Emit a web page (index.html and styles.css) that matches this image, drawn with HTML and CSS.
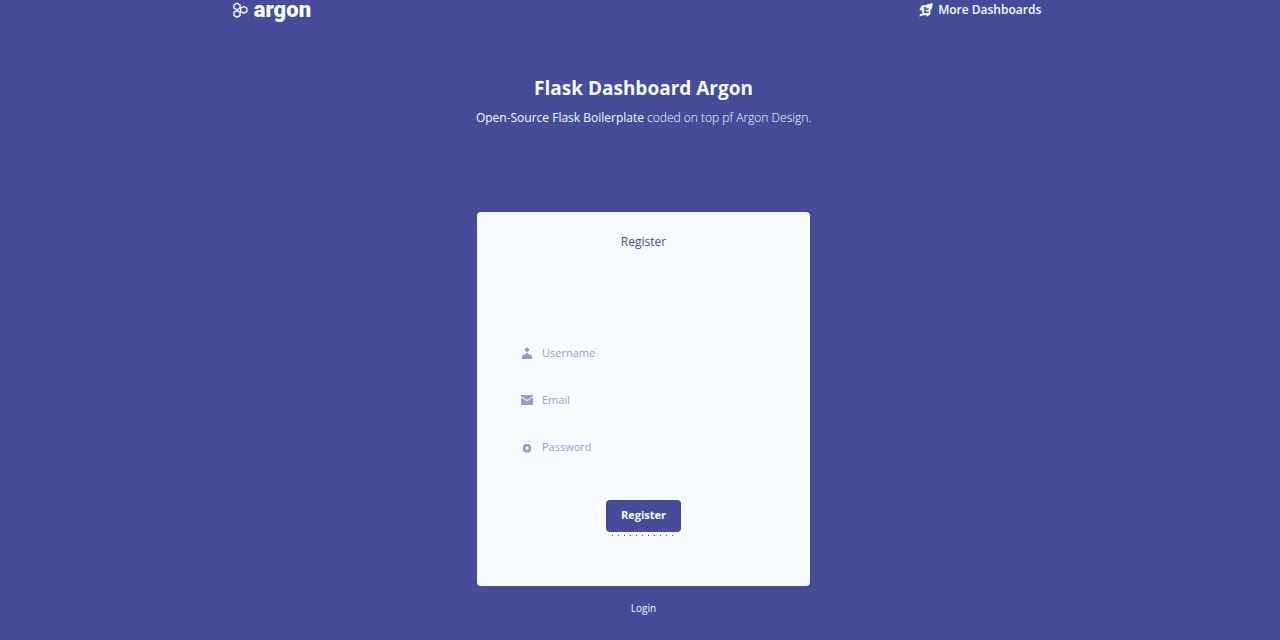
FILE: index.html
```html
<!DOCTYPE html>
<html lang="en">
<head>
<meta charset="utf-8">
<meta name="viewport" content="width=device-width, initial-scale=1">
<title>Flask Dashboard Argon - Register</title>
<link rel="stylesheet" href="styles.css">
</head>
<body>
<header class="navbar">
  <a class="brand" href="#" aria-label="argon">
    <svg class="brand-icon" viewBox="0 0 16 16" aria-hidden="true">
      <path d="M5 1.2 8 2.8V6.2L5 7.8 2 6.2V2.8ZM11.8 4.5 14.8 6.2V9.6L11.8 11.2 8.6 9.6V6.2ZM5 8.6 8 10.2V13.6L5 15.2 2 13.6V10.2Z"/>
    </svg>
    <span>argon</span>
  </a>
  <a class="nav-link" href="#">
    <svg class="nav-icon" viewBox="0 0 14 14" aria-hidden="true">
      <path fill-rule="evenodd" d="M13.8 .2 13.2 4.7 11.3 7.5 11.5 11 8 13.8 7.2 12 5.8 12.2 3.4 12.6 .2 13.6 1.2 11 3.4 10.4 3.2 8 .4 6.5 3 2.2 7 2.2 9.3 1.1ZM5 4.2 5.5 7.4 4.6 9.2 6.2 10.4 7.8 9.8 9.6 10.2 9.8 8.2 6.6 8.6 6.5 7.2 9.6 6.8 9.8 5.2 6.8 5.4 7.5 3.8Z"/>
    </svg>
    <span>More Dashboards</span>
  </a>
</header>
<main class="page">
  <section class="intro">
    <h1>Flask Dashboard Argon</h1>
    <p><a href="#">Open-Source Flask Boilerplate</a> coded on top pf Argon Design.</p>
  </section>
  <section class="card">
    <h2>Register</h2>
    <form class="form">
      <label class="field">
        <svg class="field-icon" viewBox="0 0 12 12" aria-hidden="true">
          <path d="M6 0 8.6 3 6 5.6 3.4 3ZM5 6h2v1.2h2.5l1.5 2V12H1V9.200l1.500-2H5Z"/>
        </svg>
        <input type="text" placeholder="Username" aria-label="Username">
      </label>
      <label class="field">
        <svg class="field-icon" viewBox="0 0 12 12" aria-hidden="true">
          <path d="M0 1h12v1.500L6 6 0 2.500ZM0 3.500l6 3.500 6-3.500v7.500H0Z"/>
        </svg>
        <input type="email" placeholder="Email" aria-label="Email">
      </label>
      <label class="field">
        <svg class="field-icon" viewBox="0 0 12 12" aria-hidden="true">
          <path fill-rule="evenodd" d="M3.500 0h1v1h-1ZM7.500 0h1v1h-1ZM4 3h4l2 2v4.500L8 11.500H4L2 9.500V5ZM6 5 4 7.200 6 9.400 8 7.200Z"/>
        </svg>
        <input type="password" placeholder="Password" aria-label="Password">
      </label>
      <button class="submit" type="submit">Register</button>
    </form>
  </section>
  <a class="login" href="#">Login</a>
</main>
</body>
</html>
```
FILE: styles.css
```css
:root {
  --indigo: #464b9a;
  --paper: #f7fbff;
  --muted: #989bc8;
}

* {
  box-sizing: border-box;
}

body {
  margin: 0;
  min-height: 100vh;
  padding-left: 7px;
  background: var(--indigo);
  color: var(--paper);
  font: 12px/20px "Open Sans", sans-serif;
}

a {
  color: inherit;
  text-decoration: none;
}

.navbar {
  display: flex;
  align-items: flex-start;
  justify-content: space-between;
  width: 65%;
  max-width: 980px;
  margin: 0 auto;
  padding: 0 16px 0 2px;
}

.brand,
.nav-link {
  display: flex;
  align-items: center;
}

.brand {
  gap: 6px;
  font: 900 22px/20px Roboto, sans-serif;
}

.brand-icon {
  width: 16px;
  height: 16px;
  fill: none;
  stroke: currentColor;
  stroke-width: 1.4;
}

.nav-link {
  gap: 5px;
  font-weight: 600;
}

.nav-icon {
  width: 14px;
  height: 14px;
  fill: currentColor;
}

.page {
  display: flex;
  flex-direction: column;
  align-items: center;
}

.intro {
  padding: 52px 16px 84px;
  text-align: center;
}

.intro h1 {
  margin: 0 0 4px;
  font-size: 19px;
  font-weight: 700;
  line-height: 32px;
}

.intro p {
  margin: 0;
  font-weight: 300;
}

.intro p a {
  font-weight: 400;
}

.card {
  width: 333px;
  max-width: 100%;
  padding: 20px 44px 54px;
  border-radius: 4px;
  background: var(--paper);
  color: var(--indigo);
}

.card h2 {
  margin: 0 0 84px;
  font-size: 12px;
  font-weight: 400;
  line-height: 20px;
  text-align: center;
}

.form {
  display: flex;
  flex-direction: column;
  align-items: center;
}

.field {
  display: flex;
  align-items: center;
  gap: 9px;
  width: 100%;
  height: 34px;
  margin-bottom: 13px;
}

.field-icon {
  flex: none;
  width: 12px;
  height: 12px;
  fill: var(--muted);
}

.field input {
  flex: 1;
  min-width: 0;
  padding: 0;
  border: 0;
  outline: 0;
  background: transparent;
  color: var(--indigo);
  font: 11px/20px "Open Sans", sans-serif;
}

.field input::placeholder {
  color: var(--muted);
  opacity: 1;
}

.submit {
  position: relative;
  height: 32px;
  margin-top: 23px;
  padding: 0 15px 2px;
  border: 0;
  border-radius: 4px;
  background: var(--indigo);
  color: var(--paper);
  font: 700 11px/20px "Open Sans", sans-serif;
}

.submit::after {
  content: "";
  position: absolute;
  top: 35px;
  right: 6px;
  left: 6px;
  height: 1px;
  background: repeating-linear-gradient(90deg, var(--indigo) 0 1px, transparent 1px 6px);
}

.login {
  margin-top: 12px;
  font-size: 10px;
}
```
